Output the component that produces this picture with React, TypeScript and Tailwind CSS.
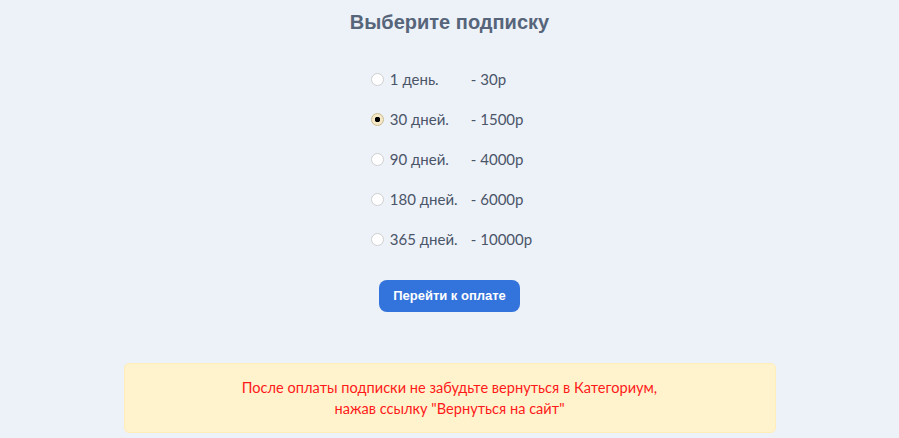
import { useState } from 'react'

const plans = [
  { id: '1', label: '1 день.', price: '- 30р' },
  { id: '30', label: '30 дней.', price: '- 1500р' },
  { id: '90', label: '90 дней.', price: '- 4000р' },
  { id: '180', label: '180 дней.', price: '- 6000р' },
  { id: '365', label: '365 дней.', price: '- 10000р' },
]

export default function App() {
  const [selected, setSelected] = useState('30')

  return (
    <div className="min-h-screen bg-[#edf1f8] flex flex-col items-center pt-[9px] font-['Lato',sans-serif]">
      <h2 className="text-[20px] font-bold text-[#56657a] font-['Liberation_Sans',Arial,sans-serif] leading-[26px]">
        Выберите подписку
      </h2>

      <div className="mt-[34px] flex flex-col gap-[20px] ml-[4px]">
        {plans.map((p) => (
          <label key={p.id} className="flex items-center h-[20px] cursor-pointer text-[15px] text-[#4a5568]">
            <input
              type="radio"
              name="plan"
              checked={selected === p.id}
              onChange={() => setSelected(p.id)}
              className="appearance-none w-[13px] h-[13px] m-0 mr-[6px] rounded-full border border-[#cfcfcf] bg-white checked:border-[#c9b98e] checked:bg-[radial-gradient(circle,#000_0_2.5px,#f4e8c6_3px)]"
            />
            <span className="w-[81px]">{p.label}</span>
            <span>{p.price}</span>
          </label>
        ))}
      </div>

      <button className="mt-[31px] h-[32px] px-[14px] rounded-[8px] bg-[#3273dc] text-white text-[13px] font-bold font-['Liberation_Sans',Arial,sans-serif]">
        Перейти к оплате
      </button>

      <div className="mt-[51px] w-[652px] h-[70px] rounded-[5px] bg-[#fff3cd] border border-[#ffeeba] flex flex-col items-center justify-center text-[14.6px] leading-[21px] text-[#ff1a1a]">
        <p>После оплаты подписки не забудьте вернуться в Категориум,</p>
        <p>нажав ссылку "Вернуться на сайт"</p>
      </div>
    </div>
  )
}
